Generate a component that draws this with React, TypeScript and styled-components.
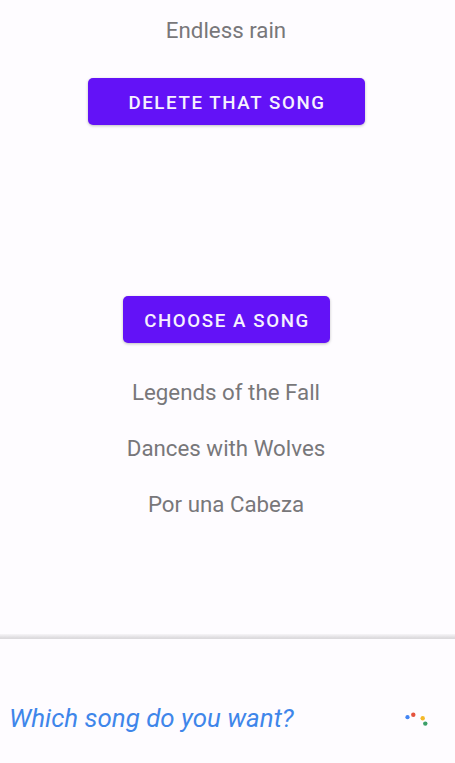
import styled, { createGlobalStyle } from "styled-components";

const GlobalStyle = createGlobalStyle`
  * {
    box-sizing: border-box;
  }

  body {
    margin: 0;
    background-color: #fefcff;
    font-family: Roboto, "Liberation Sans", sans-serif;
  }
`;

const Screen = styled.div`
  display: flex;
  flex-direction: column;
  height: 763px;
  overflow: hidden;
`;

const Content = styled.main`
  flex: 1;
  display: flex;
  flex-direction: column;
  align-items: center;
  padding: 15px 2px 0 0;
`;

const SongName = styled.p`
  margin: 0;
  padding-right: 1px;
  color: #78777a;
  font-size: 22.3px;
  line-height: 30px;
`;

const SongList = styled.ul`
  display: flex;
  flex-direction: column;
  align-items: center;
  gap: 26px;
  margin: 34px 0 0;
  padding: 0;
  list-style: none;
`;

const Button = styled.button<{ $width: number; $top: number }>`
  width: ${({ $width }) => $width}px;
  height: 47px;
  margin-top: ${({ $top }) => $top}px;
  padding: 2px 0 0 1px;
  border: 0;
  border-radius: 5px;
  background-color: #6312f7;
  box-shadow: 0 1px 3px rgba(0, 0, 0, 0.25);
  color: #f6f1fe;
  font-family: inherit;
  font-size: 18.7px;
  font-weight: 500;
  letter-spacing: 1.6px;
  text-transform: uppercase;
`;

const VoiceBar = styled.footer`
  display: flex;
  align-items: center;
  justify-content: space-between;
  height: 129px;
  padding: 39px 26px 0 9px;
  background: linear-gradient(
    to bottom,
    #f7f5f8 0,
    #dcdadd 4px,
    #dcdadd 5px,
    #fefcff 5px
  );
`;

const Prompt = styled.span`
  margin-bottom: 1px;
  color: #3f86ea;
  font-size: 25.9px;
  font-style: italic;
`;

const songs = ["Legends of the Fall", "Dances with Wolves", "Por una Cabeza"];

const ListeningDots = () => (
  <svg width="24" height="16" viewBox="0 0 24 16">
    <circle cx="2.5" cy="7.2" r="2.1" fill="#4285f4" />
    <circle cx="8.3" cy="4.8" r="2.2" fill="#e5533d" />
    <circle cx="17.7" cy="8.2" r="2.2" fill="#f4b92a" />
    <circle cx="20.3" cy="13.6" r="2.2" fill="#3c9f68" />
  </svg>
);

const App = () => {
  return (
    <Screen>
      <GlobalStyle />
      <Content>
        <SongName>Endless rain</SongName>
        <Button type="button" $width={277} $top={33}>
          Delete that song
        </Button>
        <Button type="button" $width={207} $top={171}>
          Choose a song
        </Button>
        <SongList>
          {songs.map((song) => (
            <SongName as="li" key={song}>
              {song}
            </SongName>
          ))}
        </SongList>
      </Content>
      <VoiceBar>
        <Prompt>Which song do you want?</Prompt>
        <ListeningDots />
      </VoiceBar>
    </Screen>
  );
};

export default App;
